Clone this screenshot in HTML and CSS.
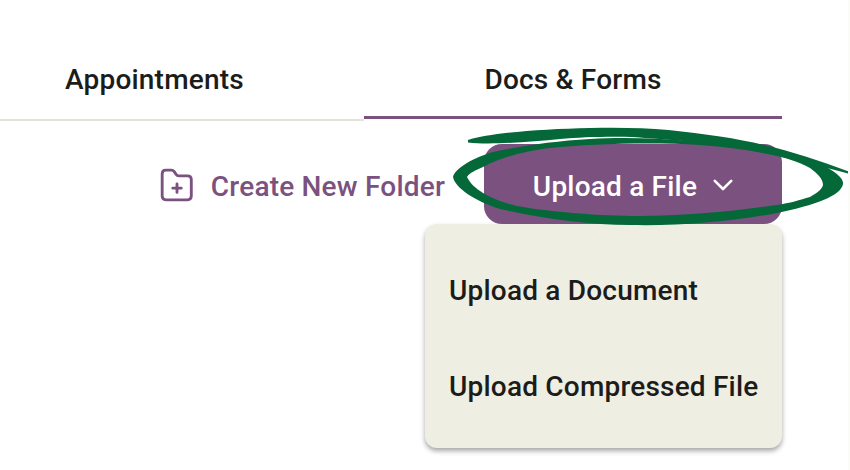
FILE: index.html
```html
<!DOCTYPE html>
<html lang="en">
<head>
<meta charset="utf-8">
<title>Docs &amp; Forms</title>
<link rel="stylesheet" href="styles.css">
</head>
<body>
<div class="page">
  <nav class="tabs">
    <div class="tab tab-first">Appointments</div>
    <div class="tab tab-active">Docs &amp; Forms</div>
  </nav>
  <div class="actions">
    <button class="link-btn">
      <svg class="folder" viewBox="0 0 34 34" width="36" height="36" fill="none" stroke="#7b5180" stroke-width="2.7" stroke-linecap="round" stroke-linejoin="round">
        <path d="M3 6.5C3 4.3 4.3 3 6.5 3h5.2c1.2 0 2 .5 2.7 1.4l1.8 2.7c.6.9 1.4 1.3 2.5 1.3h8.3c2.2 0 3.5 1.3 3.5 3.5v15.6c0 2.2-1.300 3.500-3.500 3.500H6.500C4.300 31 3 29.700 3 27.500z"/>
        <path d="M17 16v8M13 20h8"/>
      </svg>
      <span class="label">Create New Folder</span>
    </button>
    <button class="primary-btn">
      <span class="label">Upload a File</span>
      <svg class="chev" viewBox="0 0 20 12" width="20" height="12" fill="none" stroke="#fff" stroke-width="2.600" stroke-linecap="round" stroke-linejoin="round"><path d="M1.800 1.800l8.200 8.200 8.200-8.200"/></svg>
    </button>
  </div>
  <ul class="menu">
    <li>Upload a Document</li>
    <li>Upload Compressed File</li>
  </ul>
  <svg class="scribble" viewBox="0 0 850 470" width="850" height="470">
    <path fill="#056839" d="M468 140C490 133 540 129 590 128C640 126.500 680 130 720 136.500C770 144 810 157 850 172L850 174C800 161 760 150 700 143C680 140 650 138.500 632 137C600 136.500 580 137.500 560 139C530 142 490 145 468 142.500Z"/>
    <path fill="#056839" fill-rule="evenodd" d="M453 177C455 168 475 157 493 152C520 146 555 141 590 139C640 136 700 140 760 150C790 155 805 158 820 163C835 172 844 178 843 184C841 196 815 205 777 213C730 222 680 226 630 225C590 225 545 219 500 209C475 201 455 188 453 177ZM467 177C470 172 475 171 483 167C500 158 520 152 550 148C590 144 650 142 700 145C750 149 790 156 810 168C818 174 823 179 823 185C822 190 815 194 810 197C800 200 790 203 777 205C730 212 680 216 640 216C600 216 550 212 517 206C500 202 490 197 483 193C475 188 470 183 467 177Z"/>
  </svg>
</div>
</body>
</html>
```
FILE: styles.css
```css
* { box-sizing: border-box; }
html, body { margin: 0; padding: 0; background: #fff; }
body { font-family: Roboto, "Liberation Sans", sans-serif; overflow: hidden; }
.page { position: relative; width: 850px; height: 470px; overflow: hidden; border-right: 2px solid #fbfbf8; }
.tabs { display: grid; grid-template-columns: 364px 418px; width: 782px; height: 121px; padding-top: 62px; }
.tab { font-size: 28px; letter-spacing: .2px; font-weight: 500; line-height: 36px; color: #1c1c1a; }
.tab-first { padding-left: 65px; border-bottom: 2px solid #e4e3da; }
.tab-active { text-align: center; border-bottom: 3px solid #7b5180; margin-bottom: 2px; }
.actions { display: flex; justify-content: flex-end; align-items: center; width: 782px; margin-top: 23px; height: 80px; gap: 39px; }
.link-btn, .primary-btn { border: 0; font-family: inherit; font-size: 28px; letter-spacing: .2px; font-weight: 500; display: flex; align-items: center; padding: 2px 0 0; }
.label { display: block; padding-top: 3px; }
.link-btn { background: none; color: #7b5180; gap: 16px; }
.folder { display: block; }
.primary-btn { width: 298px; height: 80px; background: #7b5180; color: #fff; border-radius: 18px; justify-content: center; gap: 16px; }
.chev { display: block; }
.menu { list-style: none; margin: 0 0 0 425px; padding: 19px 0 0; width: 357px; height: 224px; background: #efeee3; border-radius: 12px; box-shadow: 0 3px 5px rgba(0,0,0,.35); }
.menu li { height: 96px; line-height: 96px; padding-left: 24px; font-size: 28px; letter-spacing: .2px; font-weight: 500; color: #1c1c1a; }
.scribble { position: absolute; left: 0; top: 0; pointer-events: none; }
```
